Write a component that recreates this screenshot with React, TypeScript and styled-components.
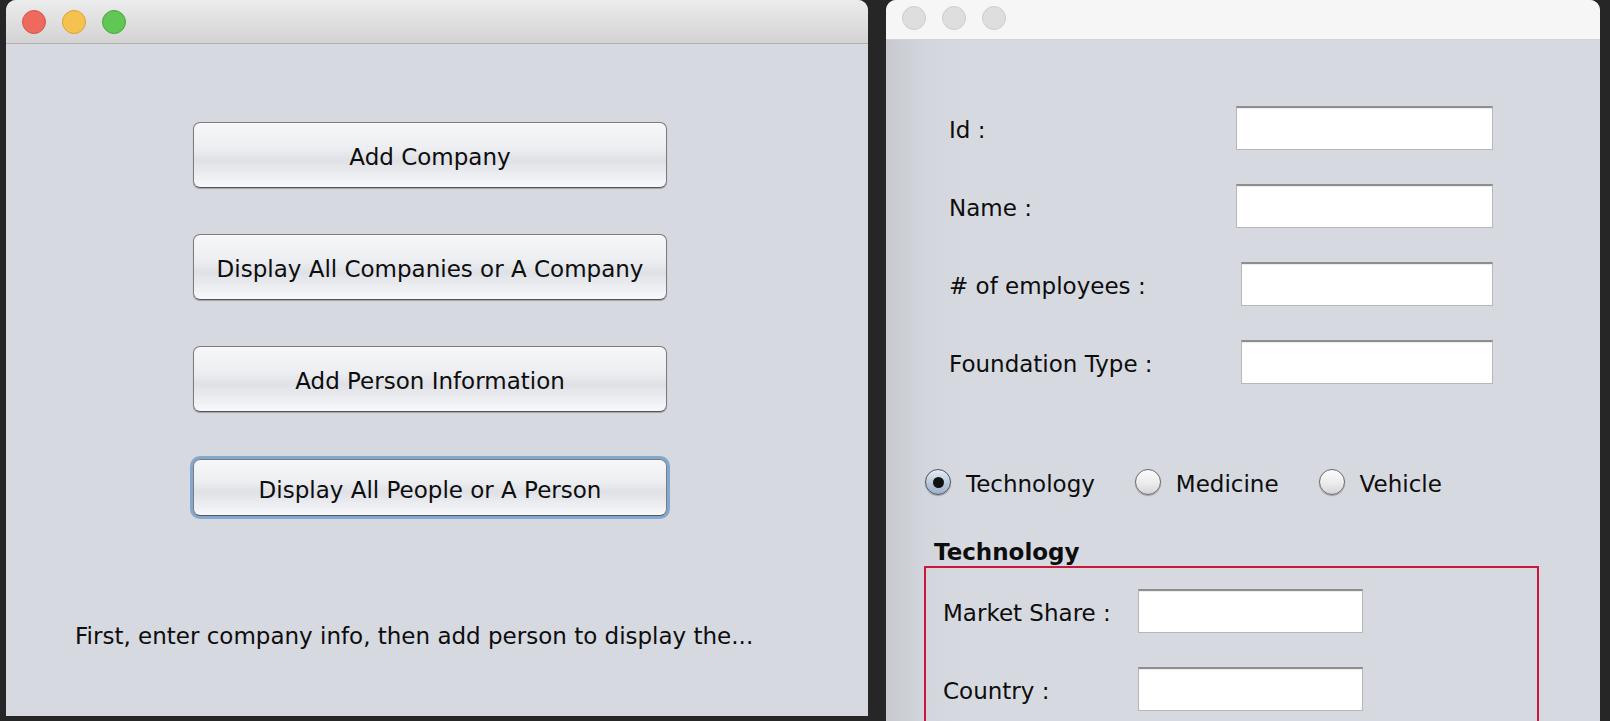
import styled, { createGlobalStyle } from "styled-components";

const GlobalStyle = createGlobalStyle`
    html, body {
        margin: 0;
        padding: 0;
        background: #262626;
        overflow: hidden;
    }
    body {
        font-family: "DejaVu Sans", "Liberation Sans", sans-serif;
        color: #0d0d0d;
    }
`;

const Desktop = styled.div`
    display: flex;
    align-items: flex-start;
    gap: 18px;
    height: 721px;
    padding-left: 6px;
    overflow: hidden;
`;

const Window = styled.div<{ $w: number; $h: number }>`
    width: ${(p) => p.$w}px;
    height: ${(p) => p.$h}px;
    flex-shrink: 0;
    display: flex;
    flex-direction: column;
    border-radius: 10px 10px 0 0;
    overflow: hidden;
    background: #d6d9e0;
`;

const TitleBar = styled.div<{ $active?: boolean }>`
    height: ${(p) => (p.$active ? 44 : 40)}px;
    flex-shrink: 0;
    display: flex;
    align-items: ${(p) => (p.$active ? "center" : "flex-start")};
    padding: ${(p) => (p.$active ? "0 0 0 16px" : "6px 0 0 16px")};
    box-sizing: border-box;
    gap: 16px;
    background: ${(p) =>
        p.$active ? "linear-gradient(#ececec, #d3d3d3)" : "#f6f6f6"};
    border-bottom: 1px solid ${(p) => (p.$active ? "#b1b1b1" : "#d2d2d2")};
`;

const Light = styled.span<{ $color: string; $edge: string }>`
    width: 24px;
    height: 24px;
    border-radius: 50%;
    box-sizing: border-box;
    background: ${(p) => p.$color};
    border: 1px solid ${(p) => p.$edge};
`;

// left window
const LeftContent = styled.div`
    flex: 1;
    display: flex;
    flex-direction: column;
    padding-top: 78px;
`;

const ButtonStack = styled.div`
    display: flex;
    flex-direction: column;
    gap: 46px;
    margin-left: 187px;
    width: 474px;
`;

const AquaButton = styled.button<{ $focused?: boolean }>`
    height: ${(p) => (p.$focused ? 57 : 66)}px;
    margin-top: ${(p) => (p.$focused ? 1 : 0)}px;
    width: 100%;
    border-radius: 7px;
    border: 1px solid #7c7c7c;
    border-bottom-color: #555;
    background: linear-gradient(
        #f7f7f8 0%,
        #eceef1 40%,
        #dfe1e6 58%,
        #eef0f4 85%,
        #f7f8fb 100%
    );
    box-shadow: ${(p) =>
        p.$focused
            ? "0 0 0 3px #82a8d2, 0 1px 1px rgba(0,0,0,0.2)"
            : "0 1px 1px rgba(0,0,0,0.25)"};
    font-family: "DejaVu Sans", "Liberation Sans", sans-serif;
    font-size: 23px;
    color: #0d0d0d;
    padding: 4px 0 0;
`;

const Hint = styled.div`
    margin: 106px 0 0 69px;
    font-size: 23px;
    line-height: 28px;
    color: #0d0d0d;
`;

// right window
const RightContent = styled.div`
    flex: 1;
    display: flex;
    flex-direction: column;
    padding: 66px 0 0 0;
    background: linear-gradient(to right, #c7c9cf 0px, #d3d6dd 40px, #d6d9e0 80px);
`;

const Form = styled.div`
    display: flex;
    flex-direction: column;
    gap: 34px;
    padding-left: 63px;
    width: 544px;
`;

const FormRow = styled.div`
    display: flex;
    align-items: center;
    justify-content: space-between;
    height: 44px;
`;

const Label = styled.span<{ $w?: number }>`
    font-size: 23px;
    line-height: 28px;
    padding-top: 4px;
    color: #0d0d0d;
    ${(p) => (p.$w ? `width: ${p.$w}px; flex-shrink: 0;` : "")}
`;

const Field = styled.div<{ $w: number }>`
    width: ${(p) => p.$w}px;
    height: 44px;
    box-sizing: border-box;
    background: #fff;
    border: 1px solid #b7b7b7;
    border-top: 2px solid #8e8e8e;
    box-shadow: inset 0 1px 1px rgba(0, 0, 0, 0.08);
`;

const RadioRow = styled.div`
    display: flex;
    align-items: center;
    gap: 40px;
    height: 30px;
    margin-top: 83px;
    padding-left: 39px;
`;

const RadioItem = styled.label`
    display: flex;
    align-items: center;
    gap: 15px;
    font-size: 23px;
    color: #0d0d0d;
`;

const RadioText = styled.span`
    padding-top: 4px;
`;

const RadioDot = styled.span<{ $checked?: boolean }>`
    width: 26px;
    height: 26px;
    border-radius: 50%;
    box-sizing: border-box;
    position: relative;
    border: 1px solid ${(p) => (p.$checked ? "#4b5562" : "#6a6a6a")};
    background: ${(p) =>
        p.$checked
            ? "linear-gradient(#e6ecf4, #b9c8da 55%, #9db1c9)"
            : "linear-gradient(#fbfbfb, #ececec 55%, #d4d4d4)"};
    box-shadow: 0 1px 1px rgba(0, 0, 0, 0.25);
    &::after {
        content: "";
        display: ${(p) => (p.$checked ? "block" : "none")};
        position: absolute;
        left: 50%;
        top: 50%;
        width: 11px;
        height: 11px;
        margin: -5.5px 0 0 -5.5px;
        border-radius: 50%;
        background: #111;
    }
`;

const SectionTitle = styled.div`
    margin-top: 39px;
    padding: 2px 0 0 48px;
    height: 28px;
    font-size: 23px;
    font-weight: bold;
    line-height: 28px;
    color: #0d0d0d;
`;

const SectionBox = styled.div`
    margin: 0 0 0 38px;
    width: 615px;
    height: 200px;
    box-sizing: border-box;
    border: 2px solid #c9173d;
    padding: 21px 0 0 17px;
    display: flex;
    flex-direction: column;
    gap: 34px;
`;

const BoxRow = styled.div`
    display: flex;
    align-items: center;
    height: 44px;
`;

function TrafficLights({ active }: { active?: boolean }) {
    if (!active) {
        return (
            <>
                <Light $color="#dedede" $edge="#cdcdcd" />
                <Light $color="#dedede" $edge="#cdcdcd" />
                <Light $color="#dedede" $edge="#cdcdcd" />
            </>
        );
    }
    return (
        <>
            <Light $color="#ee6a5f" $edge="#d45449" />
            <Light $color="#f6c24f" $edge="#d9a23a" />
            <Light $color="#62c655" $edge="#4ba73f" />
        </>
    );
}

const mainFields = [
    { label: "Id :", w: 257 },
    { label: "Name :", w: 257 },
    { label: "# of employees :", w: 252 },
    { label: "Foundation Type :", w: 252 },
];

const radios = [
    { label: "Technology", checked: true },
    { label: "Medicine", checked: false },
    { label: "Vehicle", checked: false },
];

export default function App() {
    return (
        <>
            <GlobalStyle />
            <Desktop>
                <Window $w={862} $h={716}>
                    <TitleBar $active>
                        <TrafficLights active />
                    </TitleBar>
                    <LeftContent>
                        <ButtonStack>
                            <AquaButton>Add Company</AquaButton>
                            <AquaButton>Display All Companies or A Company</AquaButton>
                            <AquaButton>Add Person Information</AquaButton>
                            <AquaButton $focused>Display All People or A Person</AquaButton>
                        </ButtonStack>
                        <Hint>First, enter company info, then add person to display the...</Hint>
                    </LeftContent>
                </Window>

                <Window $w={714} $h={740}>
                    <TitleBar>
                        <TrafficLights />
                    </TitleBar>
                    <RightContent>
                        <Form>
                            {mainFields.map((f) => (
                                <FormRow key={f.label}>
                                    <Label>{f.label}</Label>
                                    <Field $w={f.w} />
                                </FormRow>
                            ))}
                        </Form>
                        <RadioRow>
                            {radios.map((r) => (
                                <RadioItem key={r.label}>
                                    <RadioDot $checked={r.checked} />
                                    <RadioText>{r.label}</RadioText>
                                </RadioItem>
                            ))}
                        </RadioRow>
                        <SectionTitle>Technology</SectionTitle>
                        <SectionBox>
                            <BoxRow>
                                <Label $w={195}>Market Share :</Label>
                                <Field $w={225} />
                            </BoxRow>
                            <BoxRow>
                                <Label $w={195}>Country :</Label>
                                <Field $w={225} />
                            </BoxRow>
                        </SectionBox>
                    </RightContent>
                </Window>
            </Desktop>
        </>
    );
}
